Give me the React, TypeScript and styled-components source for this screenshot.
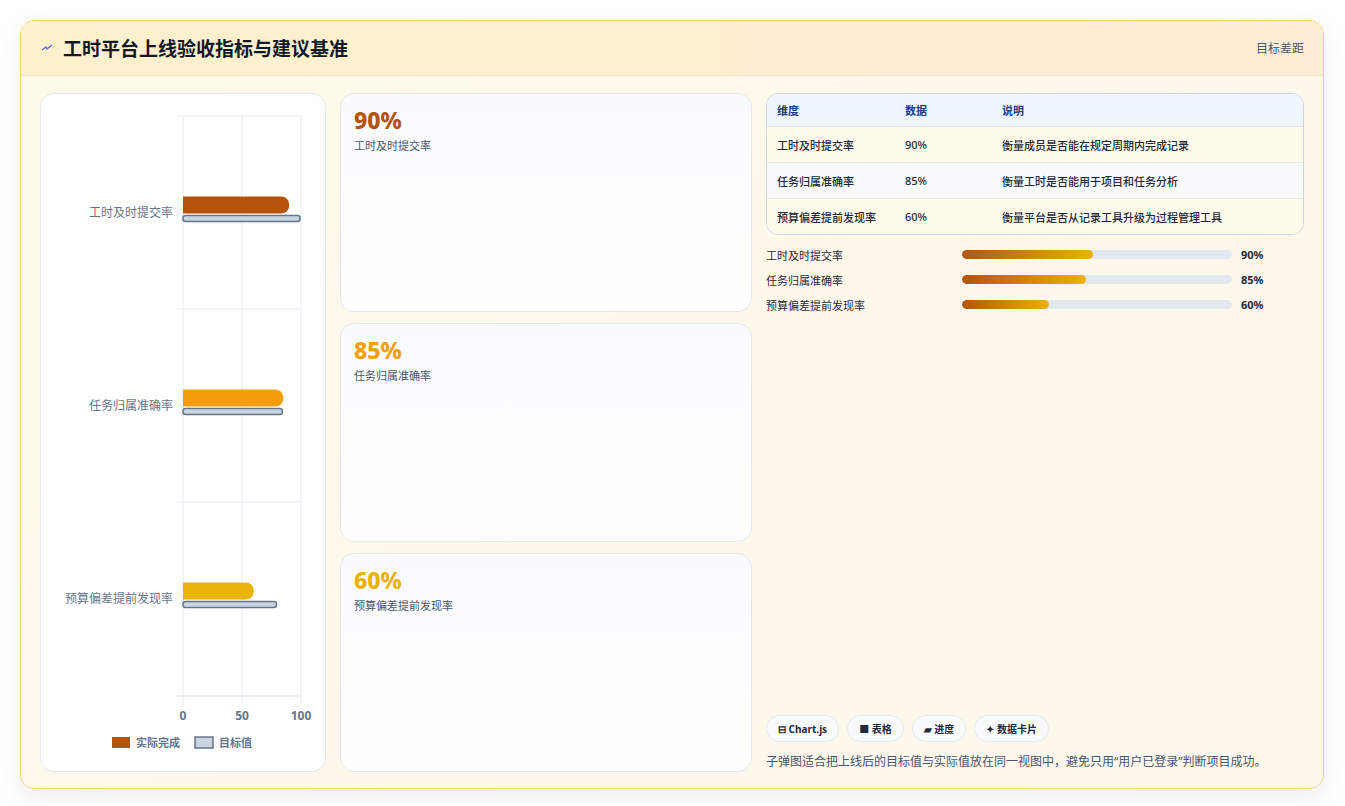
import React from "react";
import styled, { createGlobalStyle } from "styled-components";

const G = createGlobalStyle`
  html,body{margin:0;padding:0;background:#fff;}
  body{font-family:"Noto Sans","Noto Sans CJK SC",sans-serif;}
`;

const Page = styled.div`padding:20px 21px 16px 20px;`;
const Card = styled.div`
  height:769px;box-sizing:border-box;border:1px solid #f3d27a;border-radius:14px;overflow:hidden;
  background:linear-gradient(135deg,#fffbea,#fdf6ec);box-shadow:0 8px 24px rgba(0,0,0,0.08);
  display:flex;flex-direction:column;
`;
const Header = styled.div`
  height:55px;box-sizing:border-box;padding:0 19px 0 20px;display:flex;align-items:center;justify-content:space-between;
  background:linear-gradient(90deg,#fff1cc,#fdedd6);border-bottom:1px solid #f1e5c6;
`;
const Title = styled.div`display:flex;align-items:center;gap:10px;font-size:19px;font-weight:700;color:#111827;`;
const Sub = styled.div`font-size:12px;color:#475569;`;
const Body = styled.div`flex:1;display:grid;grid-template-columns:286px 412px 538px;gap:14px;padding:17px 18px 18px 19px;min-height:0;`;
const Panel = styled.div`background:#fff;border:1px solid #e2e8f0;border-radius:14px;`;
const Cards = styled.div`display:flex;flex-direction:column;gap:11px;`;
const Stat = styled.div`flex:1;border:1px solid #e2e8f0;border-radius:14px;background:linear-gradient(180deg,#f8fafc,#fff);padding:12px 13px;`;
const Big = styled.div<{c:string}>`font-size:23px;font-weight:800;color:${p=>p.c};line-height:28px;`;
const StatLbl = styled.div`font-size:11px;color:#475569;margin-top:3px;`;
const Right = styled.div`display:flex;flex-direction:column;`;
const Table = styled.div`border:1px solid #cbd5e1;border-radius:12px;overflow:hidden;font-size:11px;color:#1f2937;`;
const Row = styled.div<{bg:string;head?:boolean}>`
  display:grid;grid-template-columns:128px 97px 1fr;padding:0 10px;align-items:center;
  height:${p=>p.head?32:35}px;background:${p=>p.bg};border-top:${p=>p.head?"none":"1px solid #e2e8f0"};
  font-weight:${p=>p.head?700:500};color:${p=>p.head?"#1e3a8a":"#1f2937"};
`;
const Bars = styled.div`display:flex;flex-direction:column;gap:8px;margin-top:11px;`;
const BarRow = styled.div`display:grid;grid-template-columns:196px 270px 1fr;gap:0;align-items:center;font-size:11px;color:#1f2937;height:17px;`;
const Track = styled.div`height:9px;background:#e2e8f0;border-radius:5px;overflow:hidden;width:270px;`;
const Fill = styled.div`height:100%;border-radius:5px;background:linear-gradient(90deg,#b45309,#eab308);`;
const Val = styled.div`font-weight:700;padding-left:9px;`;
const Spacer = styled.div`flex:1;`;
const Chips = styled.div`display:flex;gap:8px;`;
const Chip = styled.div`height:27px;box-sizing:border-box;padding:0 11px;border:1px solid #e2e8f0;border-radius:14px;background:#f8fafc;display:flex;align-items:center;gap:4px;font-size:10px;font-weight:700;color:#1e293b;`;
const Note = styled.div`font-size:12px;color:#475569;line-height:19px;margin-top:10px;margin-bottom:1px;padding-right:20px;`;

const data=[
  {n:"工时及时提交率",a:90,t:100,c:"#b45309"},
  {n:"任务归属准确率",a:85,t:85,c:"#f59e0b"},
  {n:"预算偏差提前发现率",a:60,t:80,c:"#eab308"},
];
const descs=["衡量成员是否能在规定周期内完成记录","衡量工时是否能用于项目和任务分析","衡量平台是否从记录工具升级为过程管理工具"];

function Chart(){
  const x0=142,w=118,top=22,bot=602,band=193;
  return <svg width="286" height="677" style={{display:"block"}}>
    {[0,50,100].map(v=><line key={v} x1={x0+w*v/100} x2={x0+w*v/100} y1={top} y2={bot+8} stroke="#e5ecf0"/>)}
    <line x1={x0-6} x2={x0+w} y1={top} y2={top} stroke="#e5ecf0"/>
    {[1,2].map(i=><line key={i} x1={x0-6} x2={x0+w} y1={top+band*i} y2={top+band*i} stroke="#e5ecf0"/>)}
    <line x1={x0-6} x2={x0+w} y1={bot} y2={bot} stroke="#d5dde5"/>
    {data.map((d,i)=>{const cy=top+band*i+band/2; const aw=w*d.a/100, tw=w*d.t/100;
      return <g key={i}>
        <text x={132} y={cy+4} textAnchor="end" fontSize="12" fill="#64748b" fontFamily="Noto Sans CJK SC, sans-serif">{d.n}</text>
        <path d={`M${x0} ${cy-16} H${x0+aw-8} a8 8 0 0 1 8 8 v1 a8 8 0 0 1 -8 8 H${x0} Z`} fill={d.c}/>
        <rect x={x0} y={cy+3} width={tw-1} height={6} rx="2.5" fill="#cbd5e1" stroke="#64748b" strokeWidth="1.5"/>
      </g>})}
    {[0,50,100].map(v=><text key={v} x={x0+w*v/100} y={626} textAnchor="middle" fontSize="12" fontWeight="700" fill="#64748b" fontFamily="Noto Sans, sans-serif">{v}</text>)}
    <rect x={71} y={643} width={18} height={11} fill="#b45309"/>
    <text x={95} y={653} fontSize="11" fill="#64748b" fontWeight="600" fontFamily="Noto Sans CJK SC, sans-serif">实际完成</text>
    <rect x={154} y={643} width={18} height={11} fill="#cbd5e1" stroke="#64748b" strokeWidth="1.5"/>
    <text x={178} y={653} fontSize="11" fill="#64748b" fontWeight="600" fontFamily="Noto Sans CJK SC, sans-serif">目标值</text>
  </svg>;
}

export default function App(){
  return <Page><G/><Card>
    <Header>
      <Title><svg width="12" height="8" viewBox="0 0 12 8"><path d="M1 6 L5 3 L6 5 L11 1" stroke="#4f6bd8" strokeWidth="1.3" fill="none"/></svg>工时平台上线验收指标与建议基准</Title>
      <Sub>目标差距</Sub>
    </Header>
    <Body>
      <Panel><Chart/></Panel>
      <Cards>{data.map(d=><Stat key={d.n}><Big c={d.c==="#eab308"?"#eab308":d.c}>{d.a}%</Big><StatLbl>{d.n}</StatLbl></Stat>)}</Cards>
      <Right>
        <Table>
          <Row head bg="#eff6ff"><div>维度</div><div>数据</div><div>说明</div></Row>
          {data.map((d,i)=><Row key={d.n} bg={i%2?"#f8fafc":"#fffbeb"}><div>{d.n}</div><div>{d.a}%</div><div>{descs[i]}</div></Row>)}
        </Table>
        <Bars>{data.map(d=><BarRow key={d.n}><div>{d.n}</div><Track><Fill style={{width:`${d.a*0.54}%`}}/></Track><Val>{d.a}%</Val></BarRow>)}</Bars>
        <Spacer/>
        <Chips><Chip>⊟ Chart.js</Chip><Chip>■ 表格</Chip><Chip>▰ 进度</Chip><Chip>✦ 数据卡片</Chip></Chips>
        <Note>子弹图适合把上线后的目标值与实际值放在同一视图中，避免只用“用户已登录”判断项目成功。</Note>
      </Right>
    </Body>
  </Card></Page>;
}
